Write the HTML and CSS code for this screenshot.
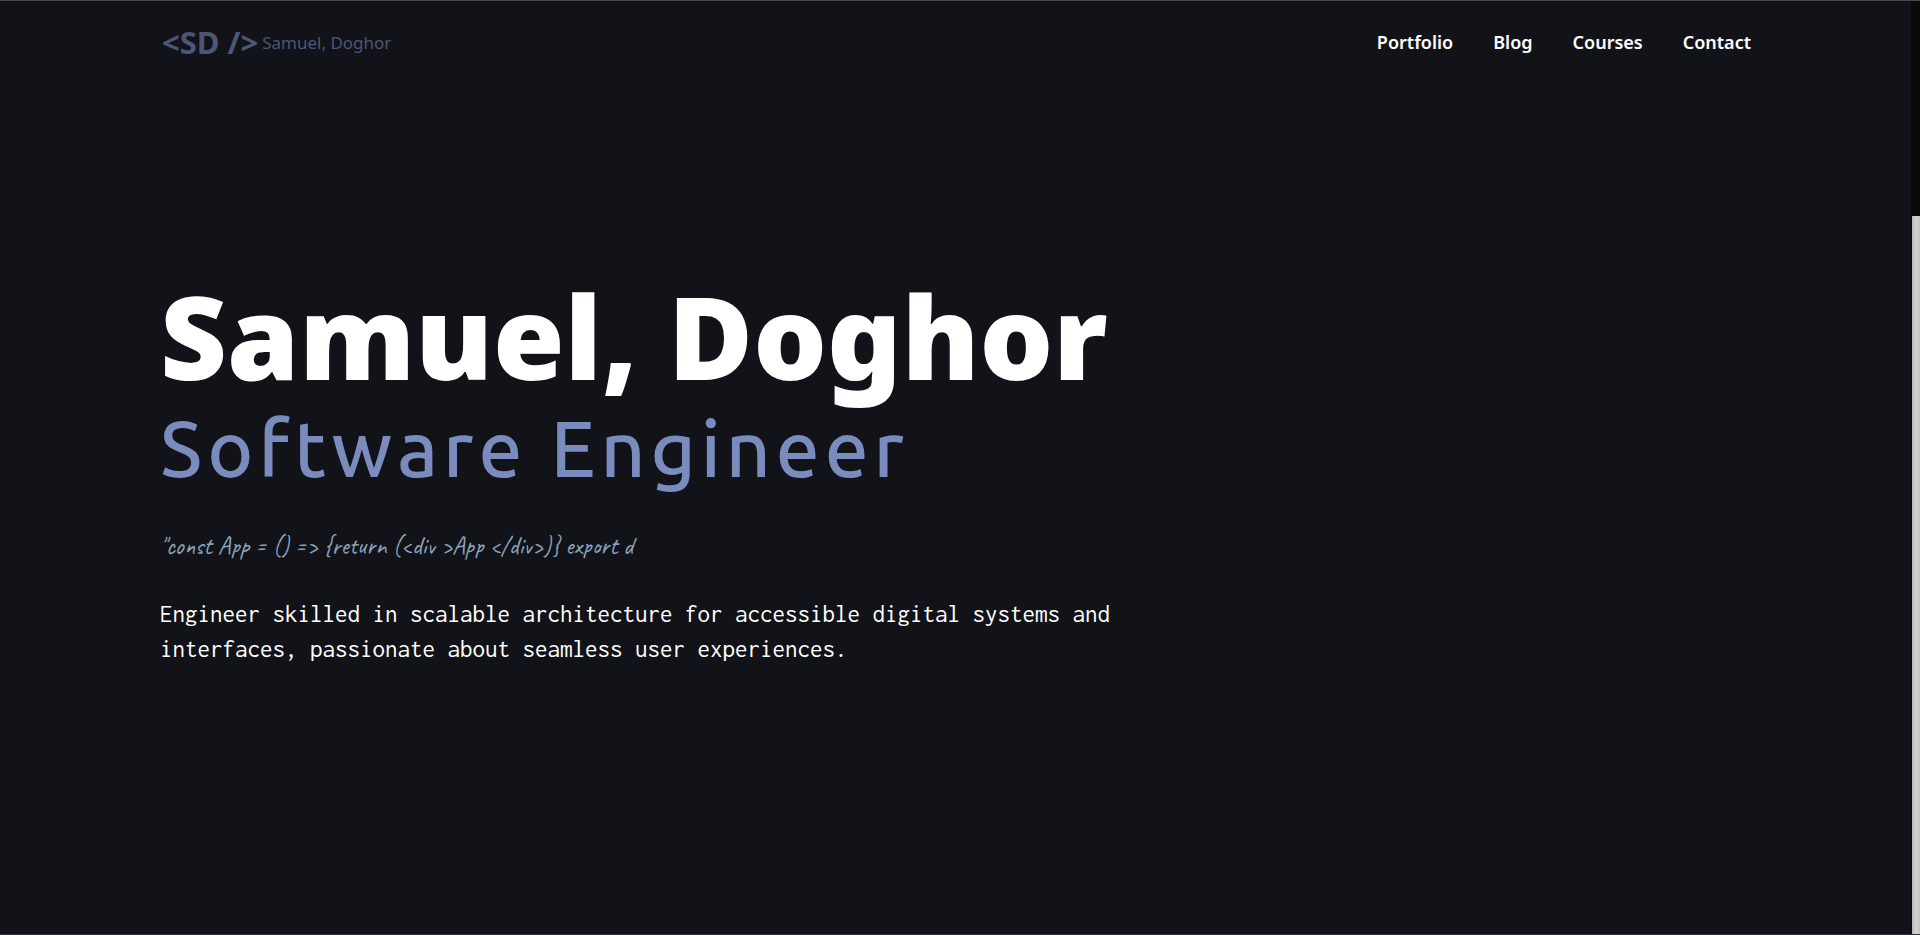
FILE: index.html
```html
<!DOCTYPE html>
<html lang="en">
<head>
<meta charset="utf-8">
<meta name="viewport" content="width=device-width, initial-scale=1">
<title>Samuel, Doghor</title>
<link rel="stylesheet" href="styles.css">
</head>
<body>
<div class="window">
  <div class="page">
    <header class="header">
      <a class="brand" href="#"><span class="brand-mark">&lt;SD /&gt;</span><span class="brand-name">Samuel, Doghor</span></a>
      <nav class="nav">
        <a href="#portfolio">Portfolio</a>
        <a href="#blog">Blog</a>
        <a href="#courses">Courses</a>
        <a href="#contact">Contact</a>
      </nav>
    </header>
    <main class="hero">
      <h1 class="name">Samuel, Doghor</h1>
      <h2 class="role">Software Engineer</h2>
      <p class="typed">"const App = () =&gt; {return (&lt;div &gt;App &lt;/div&gt;)} export d</p>
      <p class="intro">Engineer skilled in scalable architecture for accessible digital systems and interfaces, passionate about seamless user experiences.</p>
    </main>
  </div>
  <div class="scrollbar"><div class="thumb"></div></div>
</div>
</body>
</html>
```
FILE: styles.css
```css
* { box-sizing: border-box; }
body {
  margin: 0;
  background: #121318;
  color: #fff;
  font-family: "Segoe UI", "Noto Sans", sans-serif;
}
.window {
  display: flex;
  min-height: 100vh;
  border-top: 1px solid #484848;
  border-bottom: 1px solid #26323c;
}
.page { flex: 1; padding: 0 160px; }
.header {
  display: flex;
  align-items: center;
  justify-content: space-between;
  height: 82px;
}
.brand {
  display: flex;
  align-items: center;
  gap: 4px;
  padding-left: 2px;
  color: #4b5777;
  text-decoration: none;
}
.brand-mark { font-size: 31px; font-weight: 700; }
.brand-name { font-size: 17px; }
.nav { display: flex; gap: 40px; }
.nav a {
  color: #fff;
  font-size: 18px;
  font-weight: 600;
  text-decoration: none;
}
.hero { padding-top: 192px; }
.name {
  margin: 0;
  font-size: 116px;
  font-weight: 900;
  line-height: 120px;
  white-space: nowrap;
}
.role {
  margin: 0;
  color: #7a8bbd;
  font-family: Ubuntu, "Noto Sans", sans-serif;
  font-size: 78px;
  font-weight: 500;
  line-height: 106px;
  letter-spacing: 5px;
}
.typed {
  margin: 29px 0 35px;
  color: #8ba3bd;
  font-family: Caveat, cursive;
  font-size: 25px;
  line-height: 32px;
}
.intro {
  max-width: 976px;
  margin: 0;
  font-family: Inconsolata, "DejaVu Sans Mono", monospace;
  font-size: 25px;
  line-height: 35px;
}
.scrollbar {
  display: flex;
  flex-direction: column;
  justify-content: flex-end;
  width: 9px;
  padding-left: 1px;
  background: #090909;
}
.thumb {
  height: 77%;
  background: linear-gradient(90deg, #b8b8b8, #d4d4d4 50%, #c4c4c4);
}
```
